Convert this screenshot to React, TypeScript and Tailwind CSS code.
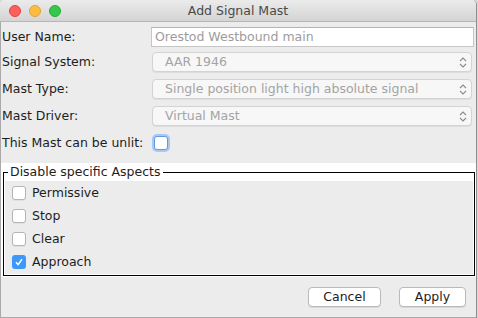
import React from "react";

function Chevrons() {
  return (
    <svg width="8" height="13" viewBox="0 0 8 13" className="shrink-0">
      <path d="M1 5 L4 2 L7 5" fill="none" stroke="#8c8c8c" strokeWidth="1.1" />
      <path d="M1 8 L4 11 L7 8" fill="none" stroke="#8c8c8c" strokeWidth="1.1" />
    </svg>
  );
}

function Combo({ value }: { value: string }) {
  return (
    <div className="ml-[1px] w-[320px] h-[20px] rounded-[4px] border border-[#d3d3d3] bg-[#f7f7f7] shadow-[0_1px_0_rgba(0,0,0,0.06)] flex items-center pl-[12px] pr-[4px]">
      <span className="flex-1 text-[#a4a4a4] whitespace-nowrap">{value}</span>
      <Chevrons />
    </div>
  );
}

function Box({ checked }: { checked?: boolean }) {
  if (checked) {
    return (
      <div className="w-[14px] h-[14px] rounded-[3px] bg-[#3b99fc] flex items-center justify-center">
        <svg width="10" height="10" viewBox="0 0 10 10">
          <path d="M2 5.2 L4.1 7.6 L8 2.2" fill="none" stroke="white" strokeWidth="1.5" />
        </svg>
      </div>
    );
  }
  return <div className="w-[14px] h-[14px] rounded-[3px] border border-[#b4b4b4] bg-white shadow-[0_1px_0_rgba(0,0,0,0.05)]" />;
}

export default function App() {
  const aspects: [string, boolean][] = [
    ["Permissive", false],
    ["Stop", false],
    ["Clear", false],
    ["Approach", true],
  ];
  return (
    <div className="w-[478px] h-[318px] bg-[#d9d9d9] flex font-['DejaVu_Sans',sans-serif] text-[12.5px] text-[#1d1d1d] leading-[16px]">
      <div className="w-[477px] h-[318px] flex flex-col bg-[#ececec] border-r border-[#8e8e8e] rounded-t-[5px] overflow-hidden">
        {/* title bar */}
        <div className="h-[22px] shrink-0 flex items-center bg-gradient-to-b from-[#ebebeb] to-[#d4d4d4] border-b border-[#b6b6b6]">
          <div className="w-[70px] flex items-center gap-[8px] pl-[9px]">
            <div className="w-[12px] h-[12px] rounded-full bg-[#fc605c] border border-[#e0443e]" />
            <div className="w-[12px] h-[12px] rounded-full bg-[#fdbc40] border border-[#dea236]" />
            <div className="w-[12px] h-[12px] rounded-full bg-[#34c84a] border border-[#27aa35]" />
          </div>
          <div className="flex-1 text-center text-[#4a4a4a]">Add Signal Mast</div>
          <div className="w-[70px]" />
        </div>

        <div className="flex-1 flex flex-col border-l border-[#a9a9a9]">
          {/* User Name */}
          <div className="mt-[5px] h-[20px] flex items-center">
            <div className="w-[150px] pl-[1px]">User Name:</div>
            <div className="w-[323px] h-[20px] border border-[#c6c6c6] border-t-[#b3b3b3] bg-white flex items-center pl-[3px] text-[#9c9c9c] whitespace-nowrap">
              Orestod Westbound main
            </div>
          </div>
          <div className="mt-[5px] h-[20px] flex items-center">
            <div className="w-[150px] pl-[1px]">Signal System:</div>
            <Combo value="AAR 1946" />
          </div>
          <div className="mt-[7px] h-[20px] flex items-center">
            <div className="w-[150px] pl-[1px]">Mast Type:</div>
            <Combo value="Single position light high absolute signal" />
          </div>
          <div className="mt-[7px] h-[20px] flex items-center">
            <div className="w-[150px] pl-[1px]">Mast Driver:</div>
            <Combo value="Virtual Mast" />
          </div>
          <div className="mt-[7px] h-[20px] flex items-center">
            <div className="w-[150px] pl-[1px]">This Mast can be unlit:</div>
            <div className="ml-[3px] w-[14px] h-[14px] rounded-[3px] border border-[#5b9be8] bg-white shadow-[0_0_0_2px_rgba(120,170,240,0.55)]" />
          </div>

          {/* Aspects panel */}
          <div className="mt-[10px] bg-white pt-[1px] pb-[1px] pl-[2px] pr-[1px]">
            <fieldset className="border border-black">
              <legend className="ml-[4px] px-[2px] leading-[16px] text-[#1d1d1d]">Disable specific Aspects</legend>
              <div className="mx-[1px] mt-[1px] mb-[1px] bg-[#ececec] flex flex-col pt-[0.5px]">
                {aspects.map(([label, checked]) => (
                  <div key={label} className="h-[23px] flex items-center pl-[7px] gap-[6px]">
                    <Box checked={checked} />
                    <span>{label}</span>
                  </div>
                ))}
              </div>
            </fieldset>
          </div>

          {/* Buttons */}
          <div className="mt-[10px] flex justify-end gap-[18px] pr-[10px]">
            <button className="w-[73px] h-[20px] rounded-[4px] border border-[#b9b9b9] bg-white shadow-[0_1px_0_rgba(0,0,0,0.08)] text-[#1d1d1d] text-[12.5px] leading-[16px]">
              Cancel
            </button>
            <button className="w-[67px] h-[20px] rounded-[4px] border border-[#b9b9b9] bg-white shadow-[0_1px_0_rgba(0,0,0,0.08)] text-[#1d1d1d] text-[12.5px] leading-[16px]">
              Apply
            </button>
          </div>
          <div className="flex-1" />
          <div className="h-[1px] bg-[#a9a9a9]" />
        </div>
      </div>
    </div>
  );
}
